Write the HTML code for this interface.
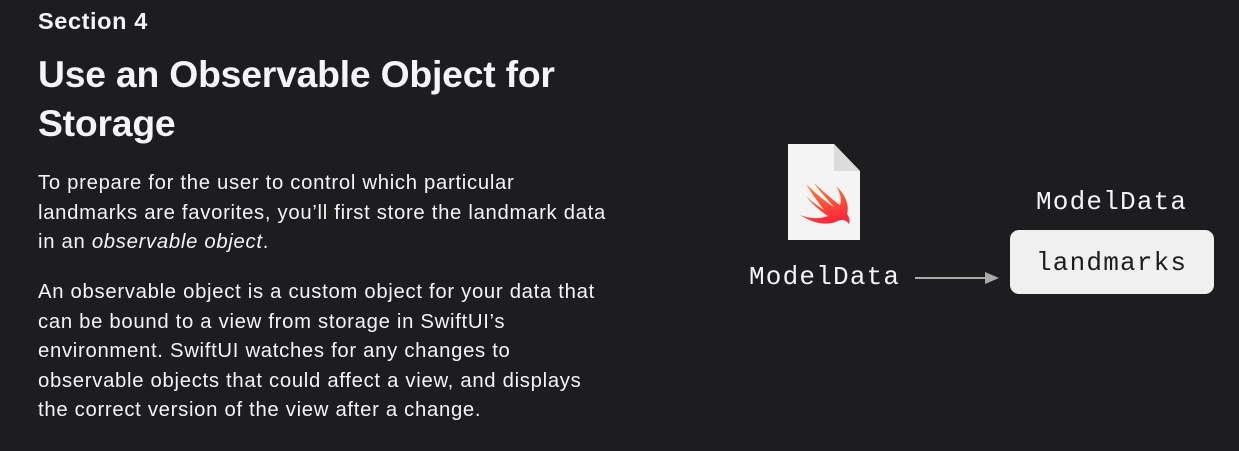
<!DOCTYPE html>
<html><head><style>
html,body{margin:0;padding:0;width:1239px;height:451px;background:#1d1d1f;overflow:hidden;font-family:"Liberation Sans",sans-serif;color:#f5f5f7}
.l{position:absolute;left:38px;top:0;width:700px}
.sec{position:absolute;top:8px;font-size:23.5px;font-weight:bold;white-space:nowrap;letter-spacing:0.6px}
h1{position:absolute;top:50px;margin:0;font-size:37.3px;line-height:49px;font-weight:bold;letter-spacing:-0.2px;width:700px;white-space:nowrap}
.p{position:absolute;font-size:20.3px;line-height:29.5px;letter-spacing:0.7px;white-space:nowrap}
.m{position:absolute;font-family:"Liberation Mono",monospace;font-size:26px;letter-spacing:1.2px;white-space:nowrap}
</style></head><body>
<div class="l">
<div class="sec">Section 4</div>
<h1>Use an Observable Object for<br>Storage</h1>
<div class="p" style="top:169px">To prepare for the user to control which particular<br>landmarks are favorites, you’ll first store the landmark data<br>in an <i>observable object</i>.</div>
<div class="p" style="top:278px">An observable object is a custom object for your data that<br>can be bound to a view from storage in SwiftUI’s<br>environment. SwiftUI watches for any changes to<br>observable objects that could affect a view, and displays<br>the correct version of the view after a change.</div>
</div>
<svg style="position:absolute;left:788px;top:144px" width="74" height="98" viewBox="0 0 74 98">
<defs><linearGradient id="g" x1="0" y1="0" x2="0.3" y2="1"><stop offset="0" stop-color="#f88a36"/><stop offset="1" stop-color="#fd2b39"/></linearGradient></defs>
<path d="M0 0H46L72 27V96H0Z" fill="#f4f4f4"/>
<path d="M46 0V27H72Z" fill="#dcdcdc"/>
<path d="M18 40C28 50 38 58 46 63C38 54 30 45 26 39C36 48 46 57 52 61C54 55 52 48 48 42C56 49 62 60 59 70C62 74 62 78 61 80C58 76 54 75 50 77C40 82 26 80 12 71C22 75 32 75 40 72C32 67 24 60 18 52C24 58 30 62 36 66C30 58 24 50 18 40Z" fill="url(#g)"/>
</svg>
<div class="m" style="left:749px;top:262px">ModelData</div>
<svg style="position:absolute;left:913px;top:270px" width="90" height="16"><line x1="2" y1="8" x2="75" y2="8" stroke="#aaa" stroke-width="2"/><path d="M72 2L86 8L72 14Z" fill="#aaa"/></svg>
<div class="m" style="left:1036px;top:187px">ModelData</div>
<div style="position:absolute;left:1010px;top:230px;width:204px;height:64px;background:#f0f0f0;border-radius:9px"></div>
<div class="m" style="left:1036px;top:248px;color:#1d1d1f">landmarks</div>
</body></html>
